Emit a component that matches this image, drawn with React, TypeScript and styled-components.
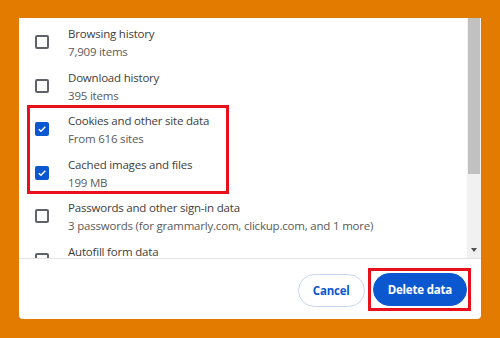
import styled, { createGlobalStyle } from "styled-components";

const GlobalStyle = createGlobalStyle`
  html, body {
    margin: 0;
    padding: 0;
    background: #e27b00;
  }
  body {
    font-family: "Open Sans", "Noto Sans", sans-serif;
  }
`;

const Page = styled.div`
  width: 500px;
  height: 338px;
  box-sizing: border-box;
  padding: 18px 19px 19px 19px;
  background: #e27b00;
`;

const Panel = styled.div`
  height: 100%;
  background: #fff;
  border-radius: 0 0 4px 4px;
  display: flex;
  flex-direction: column;
  overflow: hidden;
`;

const ScrollArea = styled.div`
  height: 240px;
  display: flex;
  border-bottom: 1px solid #e3e3e3;
`;

const List = styled.div`
  position: relative;
  flex: 1;
  padding-top: 7px;
  overflow: hidden;
`;

const Row = styled.div`
  display: flex;
  align-items: flex-start;
  height: 43.5px;
  padding-left: 16px;
`;

const Box = styled.span<{ $checked?: boolean }>`
  flex: none;
  width: 14px;
  height: 14px;
  margin-top: 10px;
  box-sizing: border-box;
  border-radius: 2px;
  border: ${(p) => (p.$checked ? "none" : "2px solid #5f6368")};
  background: ${(p) => (p.$checked ? "#0b57d0" : "transparent")};
  display: flex;
  align-items: center;
  justify-content: center;
`;

const Texts = styled.div`
  margin-left: 19px;
  display: flex;
  flex-direction: column;
  font-size: 11.5px;
  letter-spacing: -0.2px;
  line-height: 18px;
`;

const Title = styled.span`
  color: #3d3d3d;
`;

const Sub = styled.span`
  color: #5a5a5a;
`;

const Highlight = styled.div`
  position: absolute;
  left: 8px;
  top: 87px;
  width: 202px;
  height: 89px;
  box-sizing: border-box;
  border: 3px solid #e8101a;
  pointer-events: none;
`;

const Scrollbar = styled.div`
  width: 14px;
  background: #f1f1f1;
  display: flex;
  flex-direction: column;
  align-items: center;
`;

const Thumb = styled.div`
  width: 12px;
  height: 156px;
  background: #c1c1c1;
`;

const Arrow = styled.div`
  margin-top: auto;
  margin-bottom: 6px;
  width: 0;
  height: 0;
  border-left: 3.5px solid transparent;
  border-right: 3.5px solid transparent;
  border-top: 4px solid #505050;
`;

const Footer = styled.div`
  flex: 1;
  display: flex;
  justify-content: flex-end;
  align-items: flex-start;
  gap: 3px;
  padding: 9px 10px 0 0;
`;

const Marked = styled.span`
  display: flex;
  padding: 2px 1px 2px 2px;
  border: 3px solid #e8101a;
`;

const Button = styled.button<{ $primary?: boolean }>`
  height: 33px;
  margin-top: ${(p) => (p.$primary ? "0" : "6px")};
  padding: 0 14px;
  border-radius: 17px;
  font-family: "Open Sans", "Noto Sans", sans-serif;
  font-size: 11.5px;
  letter-spacing: -0.2px;
  font-weight: 700;
  cursor: pointer;
  border: 1px solid ${(p) => (p.$primary ? "#0b57d0" : "#c7d5ef")};
  background: ${(p) => (p.$primary ? "#0b57d0" : "#fff")};
  color: ${(p) => (p.$primary ? "#fff" : "#0b57d0")};
`;

const Check = () => (
  <svg width="10" height="10" viewBox="0 0 10 10">
    <path d="M1.8 5.2 L4 7.3 L8.3 2.8" fill="none" stroke="#fff" strokeWidth="1.5" />
  </svg>
);

const items = [
  { title: "Browsing history", sub: "7,909 items", checked: false },
  { title: "Download history", sub: "395 items", checked: false },
  { title: "Cookies and other site data", sub: "From 616 sites", checked: true },
  { title: "Cached images and files", sub: "199 MB", checked: true },
  {
    title: "Passwords and other sign-in data",
    sub: "3 passwords (for grammarly.com, clickup.com, and 1 more)",
    checked: false,
  },
  { title: "Autofill form data", sub: "", checked: false },
];

export default function App() {
  return (
    <>
      <GlobalStyle />
      <Page>
        <Panel>
          <ScrollArea>
            <List>
              {items.map((it) => (
                <Row key={it.title}>
                  <Box $checked={it.checked}>{it.checked && <Check />}</Box>
                  <Texts>
                    <Title>{it.title}</Title>
                    {it.sub && <Sub>{it.sub}</Sub>}
                  </Texts>
                </Row>
              ))}
              <Highlight />
            </List>
            <Scrollbar>
              <Thumb />
              <Arrow />
            </Scrollbar>
          </ScrollArea>
          <Footer>
            <Button>Cancel</Button>
            <Marked>
              <Button $primary>Delete data</Button>
            </Marked>
          </Footer>
        </Panel>
      </Page>
    </>
  );
}
